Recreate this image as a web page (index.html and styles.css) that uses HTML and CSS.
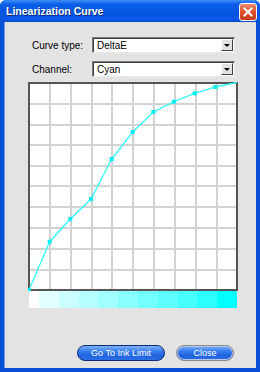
FILE: index.html
```html
<!DOCTYPE html>
<html lang="en">
<head>
    <meta charset="UTF-8">
    <title>Linearization Curve</title>
    <link rel="stylesheet" href="styles.css">
</head>
<body>
    <div class="window">
        <!-- Title bar -->
        <div class="titlebar">
            <span class="title">Linearization Curve</span>
            <button class="close-x" aria-label="Close">
                <svg width="10" height="10" viewBox="0 0 10 10">
                    <path d="M1.5 1.5 L8.5 8.5 M8.5 1.5 L1.5 8.5" stroke="#fff" stroke-width="2" stroke-linecap="square"/>
                </svg>
            </button>
        </div>

        <div class="content">
            <!-- Settings -->
            <div class="field">
                <label class="field-label">Curve type:</label>
                <div class="combo">
                    <span class="combo-value">DeltaE</span>
                    <span class="combo-btn"><i class="tri"></i></span>
                </div>
            </div>
            <div class="field">
                <label class="field-label">Channel:</label>
                <div class="combo">
                    <span class="combo-value">Cyan</span>
                    <span class="combo-btn"><i class="tri"></i></span>
                </div>
            </div>

            <!-- Curve chart -->
            <div class="chart">
                <svg width="210" height="209" viewBox="0 0 210 209">
                    <rect x="0" y="0" width="210" height="209" fill="#fff"/>
                    <g stroke="#d2d2d2" stroke-width="2">
                        <line x1="22" y1="0" x2="22" y2="209"/>
                        <line x1="43" y1="0" x2="43" y2="209"/>
                        <line x1="64" y1="0" x2="64" y2="209"/>
                        <line x1="84" y1="0" x2="84" y2="209"/>
                        <line x1="105" y1="0" x2="105" y2="209"/>
                        <line x1="126" y1="0" x2="126" y2="209"/>
                        <line x1="147" y1="0" x2="147" y2="209"/>
                        <line x1="168" y1="0" x2="168" y2="209"/>
                        <line x1="189" y1="0" x2="189" y2="209"/>
                        <line x1="0" y1="22" x2="210" y2="22"/>
                        <line x1="0" y1="43" x2="210" y2="43"/>
                        <line x1="0" y1="63" x2="210" y2="63"/>
                        <line x1="0" y1="84" x2="210" y2="84"/>
                        <line x1="0" y1="104" x2="210" y2="104"/>
                        <line x1="0" y1="125" x2="210" y2="125"/>
                        <line x1="0" y1="146" x2="210" y2="146"/>
                        <line x1="0" y1="167" x2="210" y2="167"/>
                        <line x1="0" y1="188" x2="210" y2="188"/>
                    </g>
                    <rect x="1" y="1" width="208" height="207" fill="none" stroke="#555" stroke-width="2"/>
                    <polyline fill="none" stroke="#33ffff" stroke-width="1.3"
                        points="1,208 21.7,159.7 42.3,137 63,117 83.7,77 104.7,50 125.3,30 146,19.7 166.7,11.3 187.3,5 209,0.5"/>
                    <g fill="#00f0f0">
                        <rect x="0" y="206" width="3" height="3"/>
                        <rect x="19.7" y="157.7" width="4" height="4"/>
                        <rect x="40.3" y="135" width="4" height="4"/>
                        <rect x="61" y="115" width="4" height="4"/>
                        <rect x="81.7" y="75" width="4" height="4"/>
                        <rect x="102.7" y="48" width="4" height="4"/>
                        <rect x="123.3" y="28" width="4" height="4"/>
                        <rect x="144" y="17.7" width="4" height="4"/>
                        <rect x="164.7" y="9.3" width="4" height="4"/>
                        <rect x="185.3" y="3" width="4" height="4"/>
                    </g>
                </svg>
                <!-- Ink ramp -->
                <div class="ramp">
                    <span class="step s0"></span>
                    <span class="step s1"></span>
                    <span class="step s2"></span>
                    <span class="step s3"></span>
                    <span class="step s4"></span>
                    <span class="step s5"></span>
                    <span class="step s6"></span>
                    <span class="step s7"></span>
                    <span class="step s8"></span>
                    <span class="step s9"></span>
                    <span class="step s10"></span>
                </div>
            </div>

            <!-- Buttons -->
            <div class="actions">
                <button class="xp-btn">Go To Ink Limit</button>
                <button class="xp-btn default">Close</button>
            </div>
        </div>
    </div>
</body>
</html>
```

FILE: styles.css
```css
body {
    margin: 0;
    background: #fff;
    font-family: "Liberation Sans", Arial, sans-serif;
}

/* Window frame */
.window {
    width: 260px;
    height: 372px;
    display: flex;
    flex-direction: column;
    background: #0a4fd8;
    border-radius: 6px 6px 0 0;
    box-sizing: border-box;
    overflow: hidden;
}

.titlebar {
    height: 22px;
    flex: none;
    display: flex;
    align-items: center;
    justify-content: space-between;
    padding: 0 3px 0 6px;
    background: linear-gradient(to bottom, #3d8cf5 0%, #0a5fe8 20%, #0655e0 60%, #0a58e6 90%, #0847c8 100%);
}

.title {
    color: #fff;
    font-size: 10.5px;
    font-weight: bold;
    text-shadow: 1px 1px 0 #0a2a80;
}

.close-x {
    width: 18px;
    height: 18px;
    margin-top: 1px;
    padding: 0;
    display: flex;
    align-items: center;
    justify-content: center;
    border: 1px solid #fff;
    border-radius: 3px;
    background: linear-gradient(to bottom, #f08a6a, #e0502c 50%, #c83a18);
}

/* Client area */
.content {
    flex: 1;
    margin: 0 4px 4px;
    background: #e3e3e3;
    padding: 15px 0 0 23px;
    display: flex;
    flex-direction: column;
    border-left: 1px solid #6a9cf2;
}

.field {
    display: flex;
    align-items: center;
    height: 16px;
    margin-bottom: 8px;
}

.field-label {
    width: 60px;
    padding-left: 4px;
    font-size: 10px;
    color: #000;
}

.combo {
    width: 143px;
    height: 16px;
    box-sizing: border-box;
    display: flex;
    align-items: center;
    background: #fff;
    border: 1px solid;
    border-color: #7a7a7a #e8e8e8 #e8e8e8 #7a7a7a;
    box-shadow: inset 1px 1px 0 #404040;
}

.combo-value {
    flex: 1;
    padding-left: 4px;
    font-size: 10px;
}

.combo-btn {
    width: 12px;
    height: 12px;
    margin-right: 1px;
    display: flex;
    align-items: center;
    justify-content: center;
    background: #e3e3e3;
    border: 1px solid;
    border-color: #fff #404040 #404040 #fff;
    box-sizing: border-box;
}

.tri {
    width: 0;
    height: 0;
    border-left: 3px solid transparent;
    border-right: 3px solid transparent;
    border-top: 3px solid #000;
}

/* Chart */
.chart {
    margin-top: -3px;
    display: flex;
    flex-direction: column;
}

.chart svg {
    display: block;
}

.ramp {
    display: flex;
    width: 208px;
    height: 17px;
    margin-left: 1px;
}

.step {
    flex: 2;
}

.s0 { flex: 1; background: #fff; }
.s1 { background: #e0ffff; }
.s2 { background: #cbffff; }
.s3 { background: #b6ffff; }
.s4 { background: #a0ffff; }
.s5 { background: #8affff; }
.s6 { background: #74ffff; }
.s7 { background: #5effff; }
.s8 { background: #47ffff; }
.s9 { background: #2cffff; }
.s10 { background: #00ffff; }

/* Buttons */
.actions {
    display: flex;
    justify-content: flex-end;
    gap: 11px;
    margin-top: 37px;
    padding-right: 22px;
}

.xp-btn {
    height: 16px;
    padding: 0;
    border: 1px solid #0a2a78;
    border-radius: 8px;
    background: linear-gradient(to bottom, #7fb2f8 0%, #3a7ff0 35%, #1f62dc 70%, #2d70e6 100%);
    color: #fff;
    font-family: "Liberation Sans", Arial, sans-serif;
    font-size: 9px;
    width: 88px;
}

.xp-btn.default {
    width: 58px;
    border-color: #8a8a8a;
    box-shadow: inset 0 0 0 1px #b8c8e8;
}
```
